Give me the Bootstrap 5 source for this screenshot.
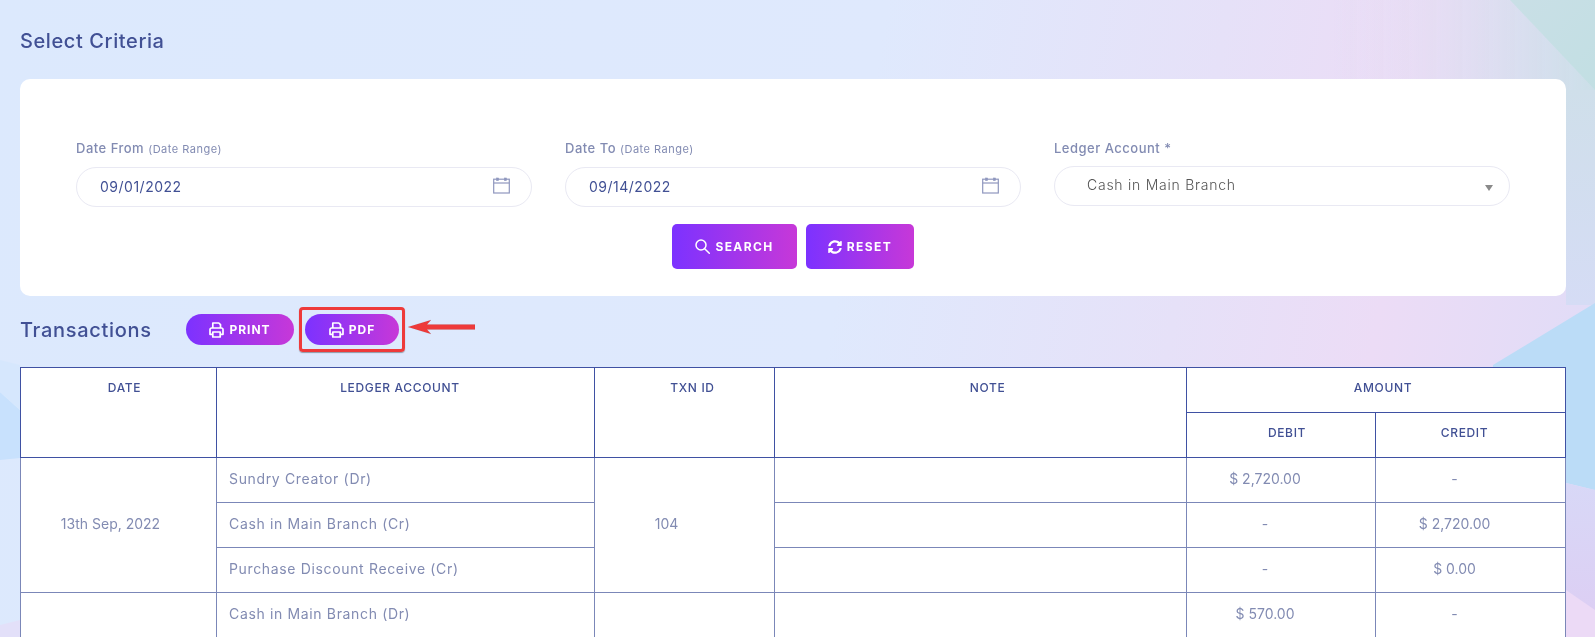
<!DOCTYPE html>
<html lang="en">
<head>
<meta charset="utf-8">
<title>Cash Book</title>
<link href="https://cdn.jsdelivr.net/npm/bootstrap@5.3.0/dist/css/bootstrap.min.css" rel="stylesheet">
<style>
html,body{height:637px;overflow:hidden}
body{font-family:Inter,"Noto Sans",sans-serif;color:#415094;padding:0 29px 0 20px;
  background:linear-gradient(100deg,#dce9fd 0%,#dfe9fd 52%,#e6e1f8 72%,#ecdcf6 84%,#dedcf7 100%)}
.bg-shapes{position:fixed;left:0;top:0;width:1595px;height:637px;z-index:-1}
.sec-title{font-weight:500;margin:0}
.top-title{font-size:20px;line-height:24px;letter-spacing:.6px;padding-top:29px;margin-bottom:26px}
.crit-panel{background:#fff;border-radius:10px;height:217px;padding:59px 56px 0}
.crit-row{--bs-gutter-x:33px}
.fld-label{font-size:13px;font-weight:500;letter-spacing:.5px;color:#828bb2;line-height:20px;margin:0 0 9px;display:block}
.fld-label small{font-size:11px;font-weight:400;letter-spacing:.5px;line-height:1}
.led-label{margin-bottom:8px}
.fld-wrap{position:relative}
.fld-input,.fld-input:focus{height:40px;border:1px solid #e9e9f3;border-radius:20px;background:#fff;box-shadow:none;
  padding:0 60px 2px 23px;font-size:14px;letter-spacing:.5px;color:#415094}
.fld-select,.fld-select:focus{height:40px;border:1px solid #e9e9f3;border-radius:20px;background-image:none;background-color:#fff;box-shadow:none;
  padding:0 40px 3px 32px;font-size:14px;font-weight:300;letter-spacing:.75px;color:#555}
.cal-ico{position:absolute;right:22px;top:10px;width:17px;height:17px;color:#8f97be}
.sel-caret{position:absolute;right:17px;top:19px;border-style:solid;border-width:6px 4.5px 0;border-color:#8a8a8a transparent transparent}
.act-row{gap:9px;margin-top:17px}
.grad-btn{background:linear-gradient(90deg,#7c32ff 0%,#c738d8 100%);border:0;color:#fff;font-size:12px;font-weight:700;letter-spacing:1.4px;
  text-transform:uppercase;display:inline-flex;align-items:center;justify-content:center;gap:5px;padding:0}
.grad-btn:hover{color:#fff;background:linear-gradient(90deg,#7c32ff 0%,#c738d8 100%)}
.btn-search{width:125px;height:45px;border-radius:5px}
.btn-reset{width:108px;height:45px;border-radius:5px}
.pill-btn{height:31px;border-radius:16px;letter-spacing:1px}
.pill-print{width:108px}
.pill-pdf{width:94px}
.tool-row{height:45px;margin-top:11px;margin-bottom:15px}
.tool-title{width:166px;font-size:20px;line-height:28px;letter-spacing:.7px}
.red-frame{border:3px solid #ee3a3a;border-radius:4px;padding:4px 3px;margin-left:5px;box-shadow:0 1px 1px rgba(0,0,0,.35);display:flex}
.red-arrow{width:68px;height:16px;margin-left:2px;margin-top:-5px}
.ledger-tbl{width:1545px;table-layout:fixed;border-collapse:collapse;background:#fff;margin:0;--bs-table-bg:#fff;--bs-table-color:#828bb2;font-size:14px}
.ledger-tbl>:not(caption)>*>*{padding:0 0 3px;border:1px solid #7b87b8;height:45px;vertical-align:middle;text-align:center;color:#828bb2;box-shadow:none}
.ledger-tbl>thead>tr>th{border-color:#3f51a3;color:#415094;font-size:12px;font-weight:500;letter-spacing:.65px;vertical-align:top;padding-top:12px;line-height:15px}
.ledger-tbl>thead>tr>th.h-date{padding-left:12px}
.ledger-tbl>thead>tr>th.h-led{padding-right:11px}
.ledger-tbl>thead>tr>th.h-txn{padding-left:16px}
.ledger-tbl>thead>tr>th.h-note{padding-left:14px}
.ledger-tbl>thead>tr>th.h-amt{padding-left:14px}
.ledger-tbl>thead>tr>th.h-deb{padding-left:12px}
.ledger-tbl>thead>tr>th.h-cre{padding-right:12px}
.ledger-tbl>tbody>tr>td.txt-l{text-align:left;padding-left:12px;letter-spacing:.65px}
.ledger-tbl>tbody>tr>td.off-date{padding-right:16px}
.ledger-tbl>tbody>tr>td.off-txn{padding-right:36px}
.ledger-tbl>tbody>tr>td.off-amt{padding-right:32px}
</style>
</head>
<body>
<svg class="bg-shapes" viewBox="0 0 1595 637" aria-hidden="true">
  <defs>
    <linearGradient id="tr" x1="0" y1="0" x2="1" y2="0"><stop offset="0" stop-color="#e8dff6" stop-opacity="0"/><stop offset="1" stop-color="#cbdfe8"/></linearGradient>
    <linearGradient id="tl" x1="0" y1="0" x2="1" y2="1"><stop offset="0" stop-color="#c9dfe6"/><stop offset="1" stop-color="#c2dfe3"/></linearGradient>
    <linearGradient id="rs" x1="0" y1="0" x2="0" y2="1"><stop offset="0" stop-color="#cfdfea"/><stop offset="1" stop-color="#d5dcf5"/></linearGradient>
    <linearGradient id="lil" x1="0" y1="0" x2="0" y2="1"><stop offset="0" stop-color="#d8d8f7"/><stop offset="1" stop-color="#ddcdf3"/></linearGradient>
  </defs>
  <rect x="1330" y="0" width="265" height="140" fill="url(#tr)"/>
  <rect x="1566" y="90" width="29" height="215" fill="url(#rs)"/>
  <polygon points="1510,0 1595,0 1595,90" fill="url(#tl)"/>
  <polygon points="1493,365 1595,303 1595,490 1566,483 1490,470" fill="#bbdcf7"/>
  <polygon points="1566,483 1595,490 1595,637 1566,637" fill="url(#lil)"/>
  <polygon points="1566,590 1595,610 1595,637 1566,637" fill="#ecdaf6"/>
  <polygon points="0,392 20,410 20,458 0,460" fill="#c8e1fd"/>
  <polygon points="0,360 20,365 20,410 0,392" fill="#d6e7fd"/>
  <polygon points="0,625 20,620 20,637 0,637" fill="#e3e0f9"/>
</svg>

<h3 class="sec-title top-title">Select Criteria</h3>

<section class="crit-panel">
  <div class="row crit-row">
    <div class="col-4">
      <label class="fld-label">Date From <small>(Date Range)</small></label>
      <div class="fld-wrap">
        <input class="form-control fld-input" type="text" value="09/01/2022">
        <svg class="cal-ico" viewBox="0 0 17 17" fill="none" stroke="currentColor" stroke-width="1.2"><rect x=".7" y="2.2" width="15.6" height="13.8"/><path d="M.7 6h15.6"/><rect x="3.6" y="1" width="2" height="2.6" fill="currentColor" stroke-width=".6"/><rect x="11.4" y="1" width="2" height="2.6" fill="currentColor" stroke-width=".6"/></svg>
      </div>
    </div>
    <div class="col-4">
      <label class="fld-label">Date To <small>(Date Range)</small></label>
      <div class="fld-wrap">
        <input class="form-control fld-input" type="text" value="09/14/2022">
        <svg class="cal-ico" viewBox="0 0 17 17" fill="none" stroke="currentColor" stroke-width="1.2"><rect x=".7" y="2.2" width="15.6" height="13.8"/><path d="M.7 6h15.6"/><rect x="3.6" y="1" width="2" height="2.6" fill="currentColor" stroke-width=".6"/><rect x="11.4" y="1" width="2" height="2.6" fill="currentColor" stroke-width=".6"/></svg>
      </div>
    </div>
    <div class="col-4">
      <label class="fld-label led-label">Ledger Account *</label>
      <div class="fld-wrap">
        <select class="form-select fld-select"><option>Cash in Main Branch</option></select>
        <span class="sel-caret"></span>
      </div>
    </div>
  </div>
  <div class="d-flex justify-content-center act-row">
    <button class="btn grad-btn btn-search" type="button">
      <svg width="15" height="15" viewBox="0 0 15 15" fill="none" stroke="currentColor" stroke-width="1.5"><circle cx="6" cy="6" r="5"/><path d="M9.7 9.7l4.6 4.6" stroke-linecap="round"/></svg>
      Search</button>
    <button class="btn grad-btn btn-reset" type="button">
      <svg width="14" height="14" viewBox="0 0 512 512" fill="currentColor"><path d="M370.7 133.3C339.5 104 298.9 88 255.8 88c-77.5.1-144.3 53.2-162.8 126.9-1.3 5.4-6.1 9.2-11.7 9.2H24.1c-7.5 0-13.2-6.8-11.8-14.2C33.9 94.9 134.8 8 256 8c66.4 0 126.8 26.1 171.3 68.7L463 41c15.1-15.1 41-4.4 41 17v134c0 13.3-10.7 24-24 24H346c-21.4 0-32.1-25.9-17-41l41.7-41.7zM32 296h134c21.4 0 32.1 25.9 17 41l-41.7 41.7c31.2 29.3 71.8 45.3 114.9 45.3 77.4-.1 144.3-53.1 162.8-126.8 1.3-5.4 6.1-9.2 11.7-9.2h57.3c7.5 0 13.2 6.8 11.8 14.2C478.1 417.1 377.2 504 256 504c-66.4 0-126.8-26.1-171.3-68.7L49 471c-15.1 15.1-41 4.4-41-17V320c0-13.3 10.7-24 24-24z"/></svg>
      Reset</button>
  </div>
</section>

<div class="d-flex align-items-center tool-row">
  <h3 class="sec-title tool-title">Transactions</h3>
  <button class="btn grad-btn pill-btn pill-print" type="button">
    <svg width="15" height="16" viewBox="0 0 15 16" fill="none" stroke="currentColor" stroke-width="1.7" stroke-linejoin="round"><path d="M3.8 6V1h6l1.7 1.7V6"/><path d="M3.5 12.3H1V7.7A1.6 1.6 0 0 1 2.6 6h9.8A1.6 1.6 0 0 1 14 7.7v4.6h-2.5"/><rect x="3.8" y="10" width="7.4" height="5"/></svg>
    Print</button>
  <div class="red-frame">
    <button class="btn grad-btn pill-btn pill-pdf" type="button">
      <svg width="15" height="16" viewBox="0 0 15 16" fill="none" stroke="currentColor" stroke-width="1.7" stroke-linejoin="round"><path d="M3.8 6V1h6l1.7 1.7V6"/><path d="M3.5 12.3H1V7.7A1.6 1.6 0 0 1 2.6 6h9.8A1.6 1.6 0 0 1 14 7.7v4.6h-2.5"/><rect x="3.8" y="10" width="7.4" height="5"/></svg>
      PDF</button>
  </div>
  <svg class="red-arrow" viewBox="0 0 68 16"><path d="M1 8L24 1l-4 4.5h48v5H20l4 4.5z" fill="#ee3a3a" stroke="rgba(0,0,0,.12)" stroke-width=".5"/></svg>
</div>

<table class="table ledger-tbl">
  <colgroup>
    <col style="width:196px"><col style="width:378px"><col style="width:180px"><col style="width:412px"><col style="width:189px"><col style="width:190px">
  </colgroup>
  <thead>
    <tr>
      <th rowspan="2" class="h-date">DATE</th>
      <th rowspan="2" class="h-led">LEDGER ACCOUNT</th>
      <th rowspan="2" class="h-txn">TXN ID</th>
      <th rowspan="2" class="h-note">NOTE</th>
      <th colspan="2" class="h-amt">AMOUNT</th>
    </tr>
    <tr><th class="h-deb">DEBIT</th><th class="h-cre">CREDIT</th></tr>
  </thead>
  <tbody>
    <tr>
      <td rowspan="3" class="off-date">13th Sep, 2022</td>
      <td class="txt-l">Sundry Creator (Dr)</td>
      <td rowspan="3" class="off-txn">104</td>
      <td></td>
      <td class="off-amt">$ 2,720.00</td>
      <td class="off-amt">-</td>
    </tr>
    <tr>
      <td class="txt-l">Cash in Main Branch (Cr)</td>
      <td></td>
      <td class="off-amt">-</td>
      <td class="off-amt">$ 2,720.00</td>
    </tr>
    <tr>
      <td class="txt-l">Purchase Discount Receive (Cr)</td>
      <td></td>
      <td class="off-amt">-</td>
      <td class="off-amt">$ 0.00</td>
    </tr>
    <tr>
      <td></td>
      <td class="txt-l">Cash in Main Branch (Dr)</td>
      <td></td>
      <td></td>
      <td class="off-amt">$ 570.00</td>
      <td class="off-amt">-</td>
    </tr>
  </tbody>
</table>
<script src="https://cdn.jsdelivr.net/npm/bootstrap@5.3.0/dist/js/bootstrap.bundle.min.js"></script>
</body>
</html>
